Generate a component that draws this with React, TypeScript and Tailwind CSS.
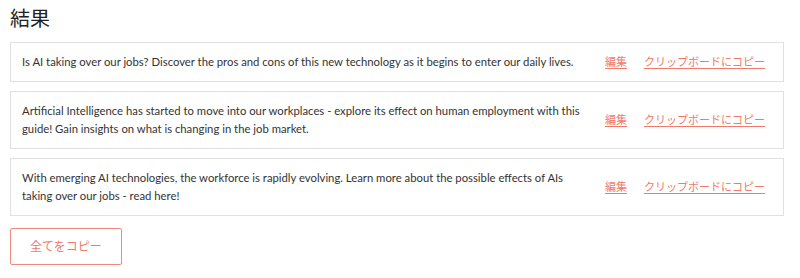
const results = [
  "Is AI taking over our jobs? Discover the pros and cons of this new technology as it begins to enter our daily lives.",
  "Artificial Intelligence has started to move into our workplaces - explore its effect on human employment with this guide! Gain insights on what is changing in the job market.",
  "With emerging AI technologies, the workforce is rapidly evolving. Learn more about the possible effects of AIs taking over our jobs - read here!",
];

export default function App() {
  return (
    <div
      className="w-[800px] h-[278px] bg-white pl-[10px] pt-[4px] text-[#333]"
      style={{ fontFamily: '"Lato", "Noto Sans CJK JP", sans-serif' }}
    >
      <h2 className="text-[20px] leading-[28px] font-normal text-[#222]">結果</h2>

      {/* Result rows */}
      <div className="mt-[10px] w-[774px] flex flex-col gap-[9px]">
        {results.map((text, i) => (
          <div
            key={i}
            className="flex items-center border border-[#e1e1e1] pl-[11px] pr-[18px] py-[10px]"
          >
            <p className="w-[570px] text-[11.3px] leading-[18px]">{text}</p>
            <div className="ml-auto flex items-center gap-[17px] text-[11px] text-[#f07a6a] shrink-0">
              <a href="#" className="underline underline-offset-2">編集</a>
              <a href="#" className="underline underline-offset-2">クリップボードにコピー</a>
            </div>
          </div>
        ))}
      </div>

      <button className="mt-[12px] w-[112px] h-[37px] border border-[#f08a7c] text-[#f07a6a] text-[12px] rounded-[2px]">
        全てをコピー
      </button>
    </div>
  );
}
